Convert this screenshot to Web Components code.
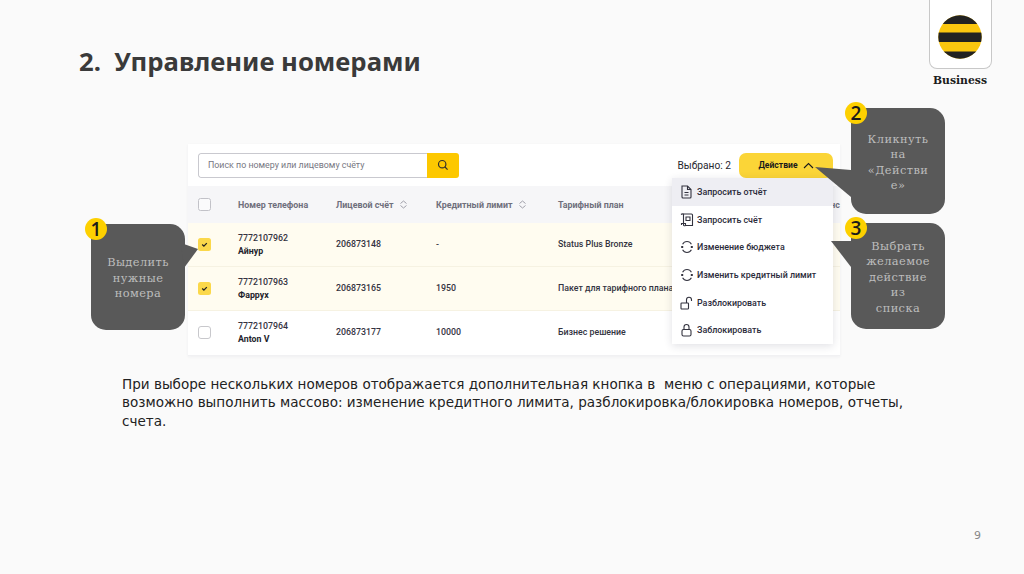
<!DOCTYPE html>
<html lang="ru">
<head>
<meta charset="utf-8">
<title>Управление номерами</title>
<style>
  html, body { margin: 0; background: #fafafa; }
</style>
</head>
<body>
<slide-page>
  <span slot="title">2. &nbsp;Управление номерами</span>
  <number-panel selected="2"></number-panel>
  <span slot="note">При выборе нескольких номеров отображается дополнительная кнопка в&nbsp; меню с операциями, которые возможно выполнить массово: изменение кредитного лимита, разблокировка/блокировка номеров, отчеты, счета.</span>
  <call-out slot="overlay" num="1" x="91" y="224" tail="90,19 107,25 93,44">Выделить нужные номера</call-out>
  <call-out slot="overlay" num="2" x="851" y="108" tail="0,62 -36,59 0,89">Кликнуть на «Действие»</call-out>
  <call-out slot="overlay" num="3" x="851" y="223" tail="0,18 -20,18 0,44">Выбрать желаемое действие из<br>списка</call-out>
</slide-page>

<script>
class BeeLogo extends HTMLElement {
  constructor() {
    super();
    this.attachShadow({ mode: "open" });
  }

  connectedCallback() {
    this.shadowRoot.innerHTML = `
      <style>
        :host { display: flex; flex-direction: column; align-items: center; width: 64px; }
        .card {
          width: 63px;
          height: 69px;
          box-sizing: border-box;
          display: flex;
          align-items: center;
          justify-content: center;
          padding-top: 6px;
          background: #fff;
          border: 1px solid #c8c8c8;
          border-top: 0;
          border-radius: 0 0 8px 8px;
        }
        .name {
          margin-top: 4px;
          font: bold 10.8px/16px "DejaVu Serif", serif;
          color: #1c1c1c;
        }
      </style>
      <div class="card">
        <svg width="44" height="44" viewBox="0 0 44 44">
          <defs><clipPath id="c"><circle cx="22" cy="22" r="21.7"/></clipPath></defs>
          <g clip-path="url(#c)">
            <rect width="44" height="44" fill="#fbc70f"/>
            <rect width="44" height="9" fill="#222"/>
            <rect y="17.5" width="44" height="9.5" fill="#222"/>
            <rect y="36.5" width="44" height="8" fill="#222"/>
          </g>
        </svg>
      </div>
      <div class="name">Business</div>
    `;
  }
}

class CallOut extends HTMLElement {
  constructor() {
    super();
    this.attachShadow({ mode: "open" });
  }

  connectedCallback() {
    const x = this.getAttribute("x");
    const y = this.getAttribute("y");
    this.shadowRoot.innerHTML = `
      <style>
        :host {
          position: absolute;
          left: ${x}px;
          top: ${y}px;
          width: 94px;
          height: 106px;
          display: flex;
          align-items: center;
          justify-content: center;
          box-sizing: border-box;
          padding-top: 3px;
          background: #595959;
          border-radius: 15px;
          color: #bdbdbd;
          font: 11.4px/15.5px "DejaVu Serif", serif;
          letter-spacing: 0.4px;
          text-align: center;
        }
        .text { width: 64px; overflow-wrap: anywhere; position: relative; }
        svg { position: absolute; left: 0; top: 0; overflow: visible; pointer-events: none; }
        .num {
          position: absolute;
          left: -6px;
          top: -6px;
          width: 22px;
          height: 22px;
          border-radius: 50%;
          background: #fdd000;
          color: #1a1a1a;
          font: 600 19px/22px "Open Sans", sans-serif;
          letter-spacing: 0;
          text-align: center;
        }
      </style>
      <svg width="94" height="106"><polygon points="${this.getAttribute("tail")}" fill="#595959"/></svg>
      <div class="text"><slot></slot></div>
      <div class="num">${this.getAttribute("num")}</div>
    `;
  }
}

class MenuItem extends HTMLElement {
  constructor() {
    super();
    this.attachShadow({ mode: "open" });
  }

  connectedCallback() {
    const icons = {
      doc: `<path d="M2 1h5.5L11 4.5V12a1 1 0 0 1-1 1H3a1 1 0 0 1-1-1z"/><path d="M7.5 1v3.5H11"/><path d="M4.5 7.5h4M4.5 10h4"/>`,
      bill: `<path d="M3 1h8.5a1 1 0 0 1 1 1v10.5H5.5"/><path d="M1 1.5c1-.8 2-.8 2.5 0V12c0 .8 1 1 2 .5V10.5H1.5V12"/><path d="M6 4h4v3.5H6z"/>`,
      sync: `<path d="M2.6 4.2A5 5 0 0 1 11.4 4.2"/><path d="M11.4 9.8A5 5 0 0 1 2.6 9.8"/><path d="M1.2 7h2M10.8 7h2" stroke-width="2"/>`,
      unlock: `<rect x="1" y="7" width="7.5" height="6" rx=".8"/><path d="M6.5 7V3.8a2.5 2.5 0 0 1 5 0V5"/>`,
      lock: `<rect x="2" y="6.5" width="9" height="6.5" rx="1.5"/><path d="M4 6.5V4a2.5 2.5 0 0 1 5 0v2.5"/>`
    };
    this.shadowRoot.innerHTML = `
      <style>
        :host {
          display: flex;
          align-items: center;
          gap: 3px;
          height: 27.7px;
          padding-left: 8px;
          font: 500 8.9px "Roboto", sans-serif;
          color: #2b2b3a;
        }
        :host([active]) { background: #eeeef3; }
        svg { flex: none; fill: none; stroke: #33333f; stroke-width: 1.1; }
      </style>
      <svg width="14" height="14" viewBox="0 0 14 14">${icons[this.getAttribute("icon")]}</svg>
      <slot></slot>
    `;
  }
}

class ActionMenu extends HTMLElement {
  constructor() {
    super();
    this.attachShadow({ mode: "open" });
  }

  connectedCallback() {
    this.shadowRoot.innerHTML = `
      <style>
        :host {
          position: absolute;
          right: 7px;
          top: 34px;
          width: 161px;
          background: #fff;
          box-shadow: 0 2px 8px rgba(40, 40, 70, 0.14);
          display: block;
        }
      </style>
      <menu-item icon="doc" active>Запросить отчёт</menu-item>
      <menu-item icon="bill">Запросить счёт</menu-item>
      <menu-item icon="sync">Изменение бюджета</menu-item>
      <menu-item icon="sync">Изменить кредитный лимит</menu-item>
      <menu-item icon="unlock">Разблокировать</menu-item>
      <menu-item icon="lock">Заблокировать</menu-item>
    `;
  }
}

class NumberRow extends HTMLElement {
  constructor() {
    super();
    this.attachShadow({ mode: "open" });
  }

  connectedCallback() {
    const checked = this.hasAttribute("checked");
    const box = checked
      ? `<svg width="13" height="13" viewBox="0 0 13 13"><rect width="13" height="13" rx="2.5" fill="#fbd84a"/><path d="M4.2 6.5l1.7 1.6 2.9-3" fill="none" stroke="#222" stroke-width="1.3"/></svg>`
      : `<svg width="13" height="13" viewBox="0 0 13 13"><rect x=".5" y=".5" width="12" height="12" rx="2.5" fill="#fff" stroke="#c8c8cc"/></svg>`;
    this.shadowRoot.innerHTML = `
      <style>
        :host {
          display: grid;
          grid-template-columns: 40px 98px 100px 122px 1fr;
          align-items: center;
          height: 44.2px;
          padding-left: 10px;
          box-sizing: border-box;
          background: ${checked ? "#fffcf0" : "#fff"};
          border-bottom: 1px solid ${checked ? "#f6f2e2" : "#f1f1f3"};
          font: 500 8.8px/13px "Roboto", sans-serif;
          color: #33333f;
          white-space: nowrap;
        }
        svg { display: block; }
        b { display: block; font-weight: 700; color: #1e1e2c; }
      </style>
      ${box}
      <div>${this.getAttribute("phone")}<b>${this.getAttribute("name")}</b></div>
      <div>${this.getAttribute("account")}</div>
      <div>${this.getAttribute("limit")}</div>
      <div>${this.getAttribute("plan")}</div>
    `;
  }
}

class NumberPanel extends HTMLElement {
  constructor() {
    super();
    this.attachShadow({ mode: "open" });
  }

  connectedCallback() {
    const sortIcon = `<svg width="9" height="9" viewBox="0 0 9 9" fill="none" stroke="#8a8a96" stroke-width=".8"><path d="M1.5 3.5L4.5 1l3 2.5M1.5 5.5L4.5 8l3-2.5"/></svg>`;
    this.shadowRoot.innerHTML = `
      <style>
        :host {
          display: block;
          position: relative;
          width: 652px;
          background: #fff;
          box-shadow: 0 1px 3px rgba(40, 40, 70, 0.05);
          font-family: "Roboto", sans-serif;
        }
        .toolbar {
          display: flex;
          align-items: center;
          height: 42px;
          padding: 0 7px 0 10px;
          box-sizing: border-box;
        }
        .search {
          display: flex;
          width: 261px;
          height: 25px;
          border-radius: 3px;
          overflow: hidden;
          box-sizing: border-box;
        }
        .search span {
          flex: 1;
          border: 1px solid #c9c9cf;
          border-right: 0;
          border-radius: 3px 0 0 3px;
          padding-left: 9px;
          font: 8.85px/23px "Roboto", sans-serif;
          color: #777782;
        }
        .search div {
          width: 32px;
          background: #fdc800;
          display: flex;
          align-items: center;
          justify-content: center;
        }
        .count { margin-left: auto; margin-right: 8px; font-size: 10.2px; color: #27272f; }
        .action {
          display: flex;
          align-items: center;
          justify-content: center;
          gap: 5px;
          width: 94px;
          height: 25px;
          border-radius: 7px;
          background: #fbd537;
          font-size: 8.6px;
          font-weight: 700;
          color: #1b1b1b;
        }
        .head {
          display: grid;
          grid-template-columns: 40px 98px 100px 122px 1fr;
          align-items: center;
          height: 37px;
          padding-left: 10px;
          background: #f6f6f8;
          font-size: 8.9px;
          font-weight: 700;
          color: #6f6f7c;
          white-space: nowrap;
        }
        .head div { display: flex; align-items: center; gap: 5px; }
        .head i {
          width: 13px;
          height: 13px;
          box-sizing: border-box;
          border: 1px solid #c2c2c8;
          border-radius: 2.5px;
          background: #fbfbfc;
        }
        .tail { position: absolute; right: 0; }
      </style>
      <div class="toolbar">
        <div class="search">
          <span>Поиск по номеру или лицевому счёту</span>
          <div><svg width="12" height="12" viewBox="0 0 12 12" fill="none" stroke="#33302a" stroke-width="1.2"><circle cx="5.2" cy="5.2" r="3.7"/><path d="M8 8l2.6 2.6"/></svg></div>
        </div>
        <span class="count">Выбрано: ${this.getAttribute("selected")}</span>
        <div class="action">Действие <svg width="11" height="7" viewBox="0 0 11 7" fill="none" stroke="#1b1b1b" stroke-width="1.1"><path d="M1 6l4.5-4.5L10 6"/></svg></div>
      </div>
      <div class="head">
        <i></i>
        <div>Номер телефона</div>
        <div>Лицевой счёт ${sortIcon}</div>
        <div>Кредитный лимит ${sortIcon}</div>
        <div>Тарифный план</div>
        <div class="tail">Баланс</div>
      </div>
      <number-row checked phone="7772107962" name="Айнур" account="206873148" limit="-" plan="Status Plus Bronze"></number-row>
      <number-row checked phone="7772107963" name="Фаррух" account="206873165" limit="1950" plan="Пакет для тарифного плана"></number-row>
      <number-row phone="7772107964" name="Anton V" account="206873177" limit="10000" plan="Бизнес решение"></number-row>
      <action-menu></action-menu>
    `;
  }
}

class SlidePage extends HTMLElement {
  constructor() {
    super();
    this.attachShadow({ mode: "open" });
  }

  connectedCallback() {
    this.shadowRoot.innerHTML = `
      <style>
        :host {
          display: block;
          position: relative;
          width: 1024px;
          height: 574px;
          overflow: hidden;
          background: #fafafa;
        }
        header {
          display: flex;
          justify-content: space-between;
          align-items: flex-start;
          padding: 0 32px 0 79px;
          height: 144px;
        }
        h1 {
          margin: 46px 0 0;
          font: bold 25.7px/32px "Noto Sans", sans-serif;
          color: #3a3a3a;
        }
        .content { margin-left: 188px; }
        .note {
          margin: 19px 0 0 122px;
          width: 790px;
          font: 13.55px/18.6px "DejaVu Sans", sans-serif;
          color: #222;
        }
        footer {
          position: absolute;
          right: 43px;
          bottom: 32px;
          font: 11px "DejaVu Sans", sans-serif;
          color: #888;
        }
      </style>
      <header>
        <h1><slot name="title"></slot></h1>
        <bee-logo></bee-logo>
      </header>
      <div class="content"><slot></slot></div>
      <p class="note"><slot name="note"></slot></p>
      <footer>9</footer>
      <slot name="overlay"></slot>
    `;
  }
}

customElements.define("bee-logo", BeeLogo);
customElements.define("call-out", CallOut);
customElements.define("menu-item", MenuItem);
customElements.define("action-menu", ActionMenu);
customElements.define("number-row", NumberRow);
customElements.define("number-panel", NumberPanel);
customElements.define("slide-page", SlidePage);
</script>
</body>
</html>
